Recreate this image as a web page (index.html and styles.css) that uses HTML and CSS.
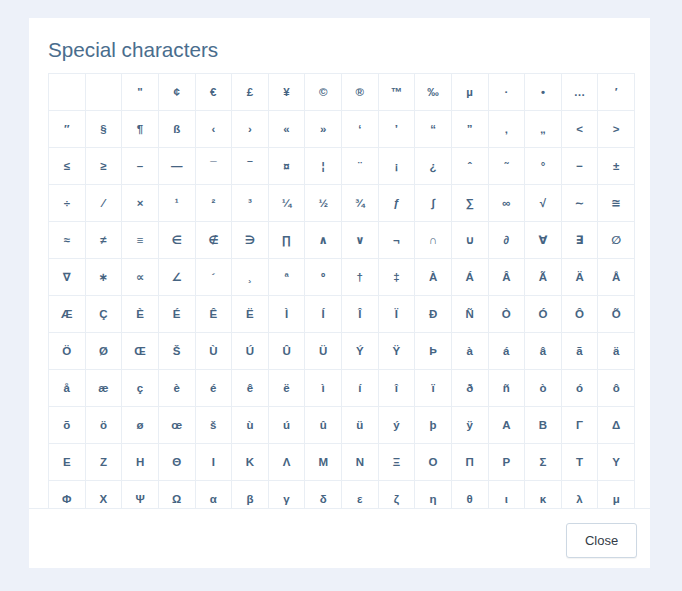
FILE: index.html
```html
<!DOCTYPE html>
<html lang="en">
<head>
    <meta charset="UTF-8">
    <title>Special characters</title>
    <link rel="stylesheet" href="styles.css">
</head>
<body>
    <div class="dialog">
        <div class="dialog-header">
            <h2>Special characters</h2>
        </div>

        <div class="char-list">
            <div class="char-grid" id="charGrid"></div>
        </div>

        <div class="dialog-footer">
            <button class="btn-close" type="button">Close</button>
        </div>
    </div>

    <script>
        // character table, 16 per row
        const chars = [
            '\u00a0', '\u2002', '"', '¢', '€', '£', '¥', '©', '®', '™', '‰', 'µ', '·', '•', '…', '′',
            '″', '§', '¶', 'ß', '‹', '›', '«', '»', '‘', '’', '“', '”', '‚', '„', '<', '>',
            '≤', '≥', '–', '—', '¯', '‾', '¤', '¦', '¨', '¡', '¿', 'ˆ', '˜', '°', '−', '±',
            '÷', '⁄', '×', '¹', '²', '³', '¼', '½', '¾', 'ƒ', '∫', '∑', '∞', '√', '∼', '≅',
            '≈', '≠', '≡', '∈', '∉', '∋', '∏', '∧', '∨', '¬', '∩', '∪', '∂', '∀', '∃', '∅',
            '∇', '∗', '∝', '∠', '´', '¸', 'ª', 'º', '†', '‡', 'À', 'Á', 'Â', 'Ã', 'Ä', 'Å',
            'Æ', 'Ç', 'È', 'É', 'Ê', 'Ë', 'Ì', 'Í', 'Î', 'Ï', 'Ð', 'Ñ', 'Ò', 'Ó', 'Ô', 'Õ',
            'Ö', 'Ø', 'Œ', 'Š', 'Ù', 'Ú', 'Û', 'Ü', 'Ý', 'Ÿ', 'Þ', 'à', 'á', 'â', 'ã', 'ä',
            'å', 'æ', 'ç', 'è', 'é', 'ê', 'ë', 'ì', 'í', 'î', 'ï', 'ð', 'ñ', 'ò', 'ó', 'ô',
            'õ', 'ö', 'ø', 'œ', 'š', 'ù', 'ú', 'û', 'ü', 'ý', 'þ', 'ÿ', 'Α', 'Β', 'Γ', 'Δ',
            'Ε', 'Ζ', 'Η', 'Θ', 'Ι', 'Κ', 'Λ', 'Μ', 'Ν', 'Ξ', 'Ο', 'Π', 'Ρ', 'Σ', 'Τ', 'Υ',
            'Φ', 'Χ', 'Ψ', 'Ω', 'α', 'β', 'γ', 'δ', 'ε', 'ζ', 'η', 'θ', 'ι', 'κ', 'λ', 'μ'
        ];

        const grid = document.getElementById('charGrid');
        chars.forEach(ch => {
            const cell = document.createElement('span');
            cell.className = 'char-cell';
            cell.textContent = ch;
            grid.appendChild(cell);
        });
    </script>
</body>
</html>
```

FILE: styles.css
```css
html, body {
    margin: 0;
    height: 100%;
}
body {
    background-color: #edf1f9;
    padding: 18px 32px 23px 29px;
    box-sizing: border-box;
    font-family: "Liberation Sans", Arial, sans-serif;
}
.dialog {
    width: 621px;
    height: 550px;
    background: #fff;
    display: flex;
    flex-direction: column;
}
.dialog-header {
    padding: 20px 19px 0;
}
.dialog-header h2 {
    margin: 0 0 11px;
    font-size: 20.7px;
    line-height: 24px;
    font-weight: normal;
    color: #4a6d8d;
}
.char-list {
    flex: 1;
    margin: 0 15px 0 19px;
    overflow-y: auto;
    scrollbar-width: none;
}
.char-list::-webkit-scrollbar {
    display: none;
}
.char-grid {
    display: grid;
    grid-template-columns: repeat(16, 1fr);
    border-top: 1px solid #e9eef4;
    border-left: 1px solid #e9eef4;
}
.char-cell {
    height: 36px;
    display: flex;
    align-items: center;
    justify-content: center;
    border-right: 1px solid #e9eef4;
    border-bottom: 1px solid #e9eef4;
    font-family: "Liberation Sans", "DejaVu Sans", sans-serif;
    font-size: 11.5px;
    font-weight: bold;
    color: #466482;
    cursor: pointer;
}
.dialog-footer {
    border-top: 1px solid #e9eef4;
    padding: 14px 13px 10px;
    display: flex;
    justify-content: flex-end;
}
.btn-close {
    width: 71px;
    height: 35px;
    background: #fff;
    border: 1px solid #cdd8e3;
    border-radius: 3px;
    box-shadow: 0 1px 1px rgba(0, 0, 0, 0.05);
    font-family: "Liberation Sans", Arial, sans-serif;
    font-size: 13px;
    color: #333c47;
    cursor: pointer;
}
```
